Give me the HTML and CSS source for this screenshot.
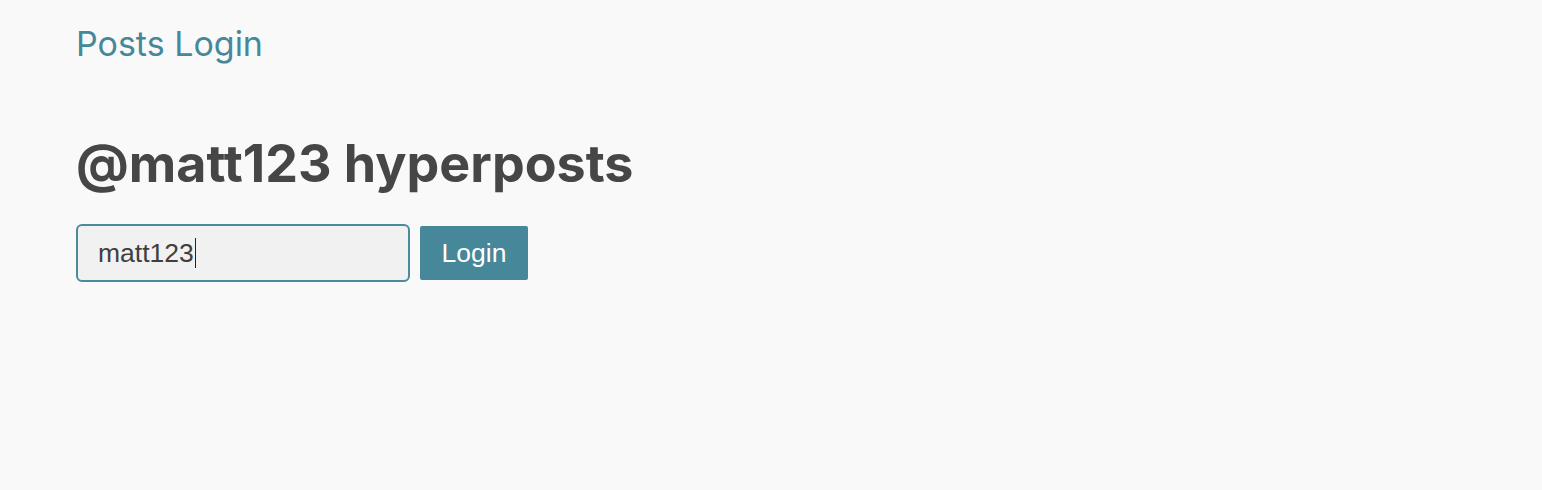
FILE: index.html
```html
<!DOCTYPE html>
<html>
<head>
<meta charset="utf-8">
<link rel="stylesheet" href="styles.css">
</head>
<body>
<div class="page">
  <nav class="nav"><a href="#">Posts</a> <a href="#">Login</a></nav>
  <h1 class="title">@matt123 hyperposts</h1>
  <form class="login">
    <div class="field"><span class="value">matt123</span><span class="caret"></span></div>
    <button type="button" class="btn">Login</button>
  </form>
</div>
</body>
</html>
```
FILE: styles.css
```css
html, body { margin: 0; padding: 0; }
body {
  background: #f9f9f9;
  font-family: Inter, Roboto, "Liberation Sans", sans-serif;
  color: #464646;
}
.page { padding: 24px 76px; }
.nav { font-size: 34px; line-height: 40px; color: #46889a; }
.nav a { color: #46889a; text-decoration: none; }
.title {
  margin: 70px 0 0;
  font-size: 52px;
  line-height: 60px;
  font-weight: 700;
  color: #464646;
}
.login { display: flex; align-items: center; gap: 10px; margin-top: 30px; }
.field {
  box-sizing: border-box;
  width: 334px; height: 58px;
  border: 2px solid #4a8a9b;
  border-radius: 6px;
  background: #f1f1f1;
  padding: 0 20px;
  display: flex; align-items: center;
  font-family: "Liberation Sans", Arial, sans-serif;
  font-size: 26.5px;
  color: #3f3f3f;
}
.caret { display: inline-block; width: 1px; height: 30px; background: #222; margin-left: 1px; }
.btn {
  box-sizing: border-box;
  width: 108px; height: 54px;
  border: none; border-radius: 2px;
  background: #468799;
  color: #fff;
  font-family: "Liberation Sans", Arial, sans-serif;
  font-size: 26.5px;
  padding: 0;
}
```
